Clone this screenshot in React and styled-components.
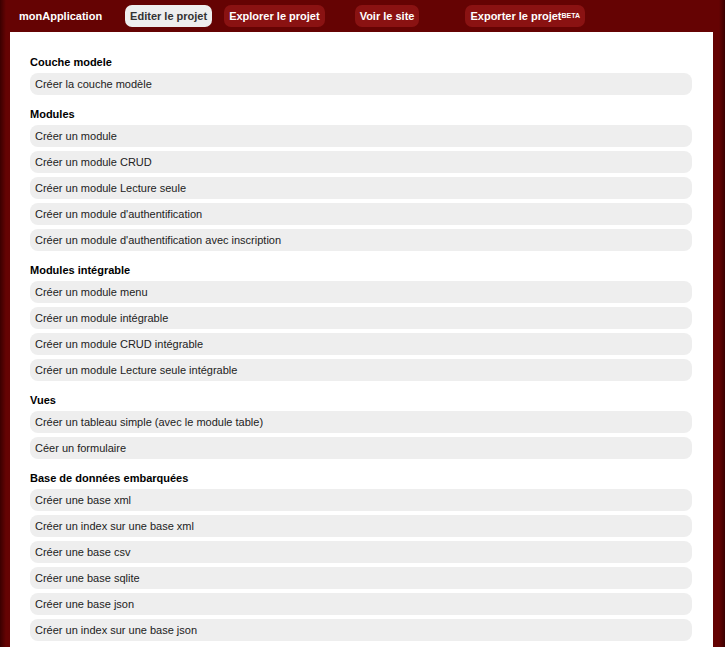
import React from 'react';
import styled, { createGlobalStyle } from 'styled-components';

const Global = createGlobalStyle`
  body {
    margin: 0;
    background: #650303;
    font-family: "Liberation Sans", Arial, sans-serif;
    font-size: 11px;
  }
`;

const Page = styled.div`
  min-height: 647px;
  display: flex;
  flex-direction: column;
  background: linear-gradient(90deg, #3a0000 0, #650303 6px, #650303 calc(100% - 6px), #3a0000 100%);
`;

const TopBar = styled.div`
  height: 32px;
  display: flex;
  align-items: center;
  padding-left: 19px;
`;

const Brand = styled.span`
  color: #fff;
  font-weight: bold;
  font-size: 11px;
  margin-right: 23px;
`;

const NavLink = styled.a`
  margin-left: ${(p) => p.$gap}px;
  height: 22px;
  display: flex;
  align-items: center;
  padding: 0 5px;
  border-radius: 7px;
  font-weight: bold;
  font-size: 11px;
  color: ${(p) => (p.$active ? '#333' : '#fff')};
  background: ${(p) => (p.$active ? '#eee' : '#8a1212')};
  sup { font-size: 7px; position: relative; top: -1px; }
`;

const Panel = styled.div`
  flex: 1;
  margin: 0 12px 0 10px;
  background: #fff;
  padding: 18px 21px 4px 20px;
`;

const SectionTitle = styled.h3`
  margin: 0;
  height: 23px;
  display: flex;
  align-items: center;
  font-size: 11px;
  font-weight: bold;
  color: #000;
`;

const List = styled.div`
  display: flex;
  flex-direction: column;
  gap: 4px;
  margin-bottom: 7px;
`;

const Item = styled.div`
  height: 22px;
  display: flex;
  align-items: center;
  padding-left: 5px;
  border-radius: 8px;
  background: #eeeeee;
  color: #222;
  font-size: 11px;
`;

const sections = [
  ['Couche modele', ['Créer la couche modèle']],
  ['Modules', [
    'Créer un module',
    'Créer un module CRUD',
    'Créer un module Lecture seule',
    "Créer un module d'authentification",
    "Créer un module d'authentification avec inscription",
  ]],
  ['Modules intégrable', [
    'Créer un module menu',
    'Créer un module intégrable',
    'Créer un module CRUD intégrable',
    'Créer un module Lecture seule intégrable',
  ]],
  ['Vues', ['Créer un tableau simple (avec le module table)', 'Céer un formulaire']],
  ['Base de données embarquées', [
    'Créer une base xml',
    'Créer un index sur une base xml',
    'Créer une base csv',
    'Créer une base sqlite',
    'Créer une base json',
    'Créer un index sur une base json',
  ]],
];

export default function App() {
  return (
    <Page>
      <Global />
      <TopBar>
        <Brand>monApplication</Brand>
        <NavLink $active $gap={0}>Editer le projet</NavLink>
        <NavLink $gap={12}>Explorer le projet</NavLink>
        <NavLink $gap={30}>Voir le site</NavLink>
        <NavLink $gap={46}>Exporter le projet<sup>BETA</sup></NavLink>
      </TopBar>
      <Panel>
        {sections.map(([title, items]) => (
          <React.Fragment key={title}>
            <SectionTitle>{title}</SectionTitle>
            <List>
              {items.map((it) => <Item key={it}>{it}</Item>)}
            </List>
          </React.Fragment>
        ))}
      </Panel>
    </Page>
  );
}
